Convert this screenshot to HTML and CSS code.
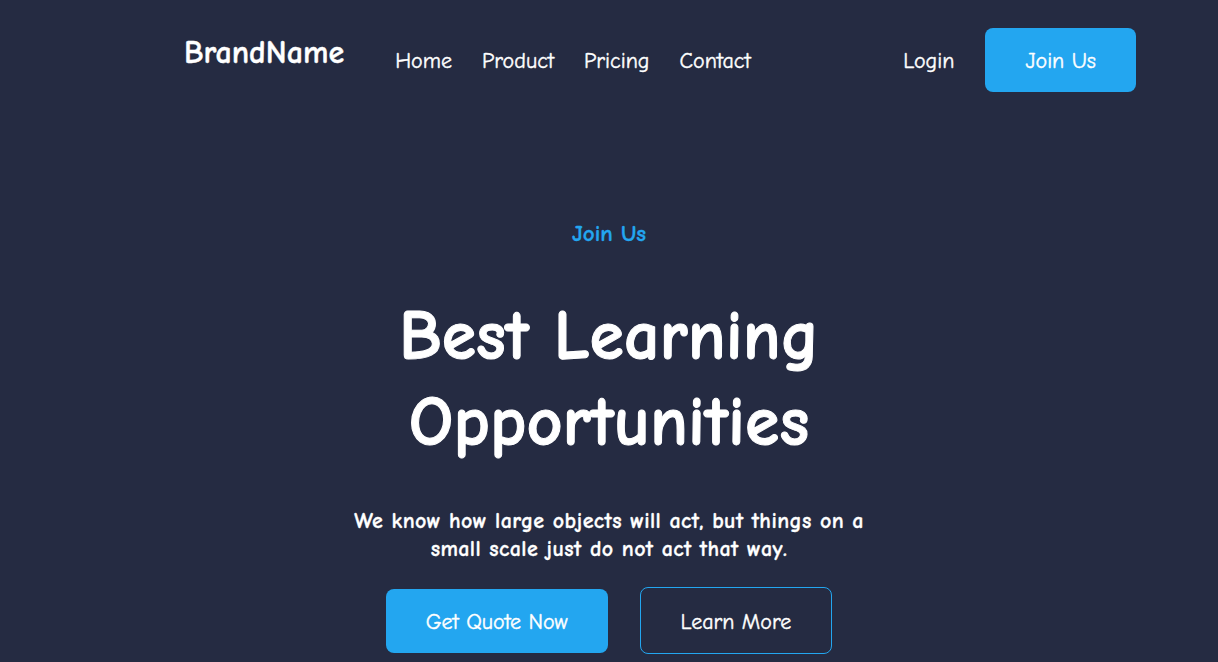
FILE: index.html
```html
<!DOCTYPE html>
<html lang="en">
<head>
<meta charset="utf-8">
<title>BrandName</title>
<link rel="stylesheet" href="styles.css">
</head>
<body>
<header class="header">
  <div class="brand">BrandName</div>
  <nav class="nav">
    <a href="#">Home</a>
    <a href="#">Product</a>
    <a href="#">Pricing</a>
    <a href="#">Contact</a>
  </nav>
  <div class="actions">
    <a href="#" class="login">Login</a>
    <a href="#" class="btn btn-primary">Join Us</a>
  </div>
</header>
<main class="hero">
  <div class="eyebrow">Join Us</div>
  <h1 class="title">Best Learning<br>Opportunities</h1>
  <p class="lead">We know how large objects will act, but things on a small scale just do not act that way.</p>
  <div class="cta">
    <a href="#" class="btn btn-primary">Get Quote Now</a>
    <a href="#" class="btn btn-outline">Learn More</a>
  </div>
</main>
</body>
</html>
```
FILE: styles.css
```css
* { box-sizing: border-box; }
html, body { margin: 0; padding: 0; }
body {
  background: #252B42;
  color: #ffffff;
  font-family: "Comic Sans MS", "Comic Neue", "Noto Sans", sans-serif;
  height: 662px;
  overflow: hidden;
}
a { color: inherit; text-decoration: none; }
.header {
  display: flex;
  align-items: center;
  height: 92px;
  padding: 28px 82px 0 184px;
}
.brand {
  font-size: 32px;
  font-weight: 700;
  line-height: 40px;
  margin-top: -14px;
  -webkit-text-stroke: 0.4px #fff;
}
.nav {
  display: flex;
  gap: 30px;
  margin-left: 51px;
  padding-top: 2px;
  font-size: 22px;
  line-height: 30px;
  -webkit-text-stroke: 0.4px #fff;
}
.actions {
  margin-left: auto;
  display: flex;
  align-items: center;
  gap: 31px;
  font-size: 22px;
}
.login {
  padding-top: 2px;
  -webkit-text-stroke: 0.4px #fff;
}
.btn {
  display: inline-flex;
  align-items: center;
  justify-content: center;
  height: 64px;
  padding: 2px 40px 0;
  border-radius: 8px;
  font-size: 22px;
  -webkit-text-stroke: 0.4px #fff;
}
.btn-primary { background: #23A6F0; color: #fff; }
.btn-outline { border: 1px solid #23A6F0; color: #fff; height: 67px; }
.hero {
  display: flex;
  flex-direction: column;
  align-items: center;
  text-align: center;
  padding-top: 127px;
}
.eyebrow {
  color: #23A6F0;
  font-weight: 700;
  font-size: 23px;
  line-height: 30px;
  -webkit-text-stroke: 0.3px #23A6F0;
}
.title {
  margin: 45px 0 0;
  font-size: 70px;
  font-weight: 700;
  line-height: 86px;
  -webkit-text-stroke: 1px #fff;
}
.lead {
  margin: 41px 0 0;
  max-width: 540px;
  font-size: 22px;
  font-weight: 700;
  line-height: 28px;
  letter-spacing: 0.4px;
  -webkit-text-stroke: 0.3px #fff;
}
.cta {
  display: flex;
  gap: 32px;
  margin-top: 24px;
  align-items: center;
}
```
